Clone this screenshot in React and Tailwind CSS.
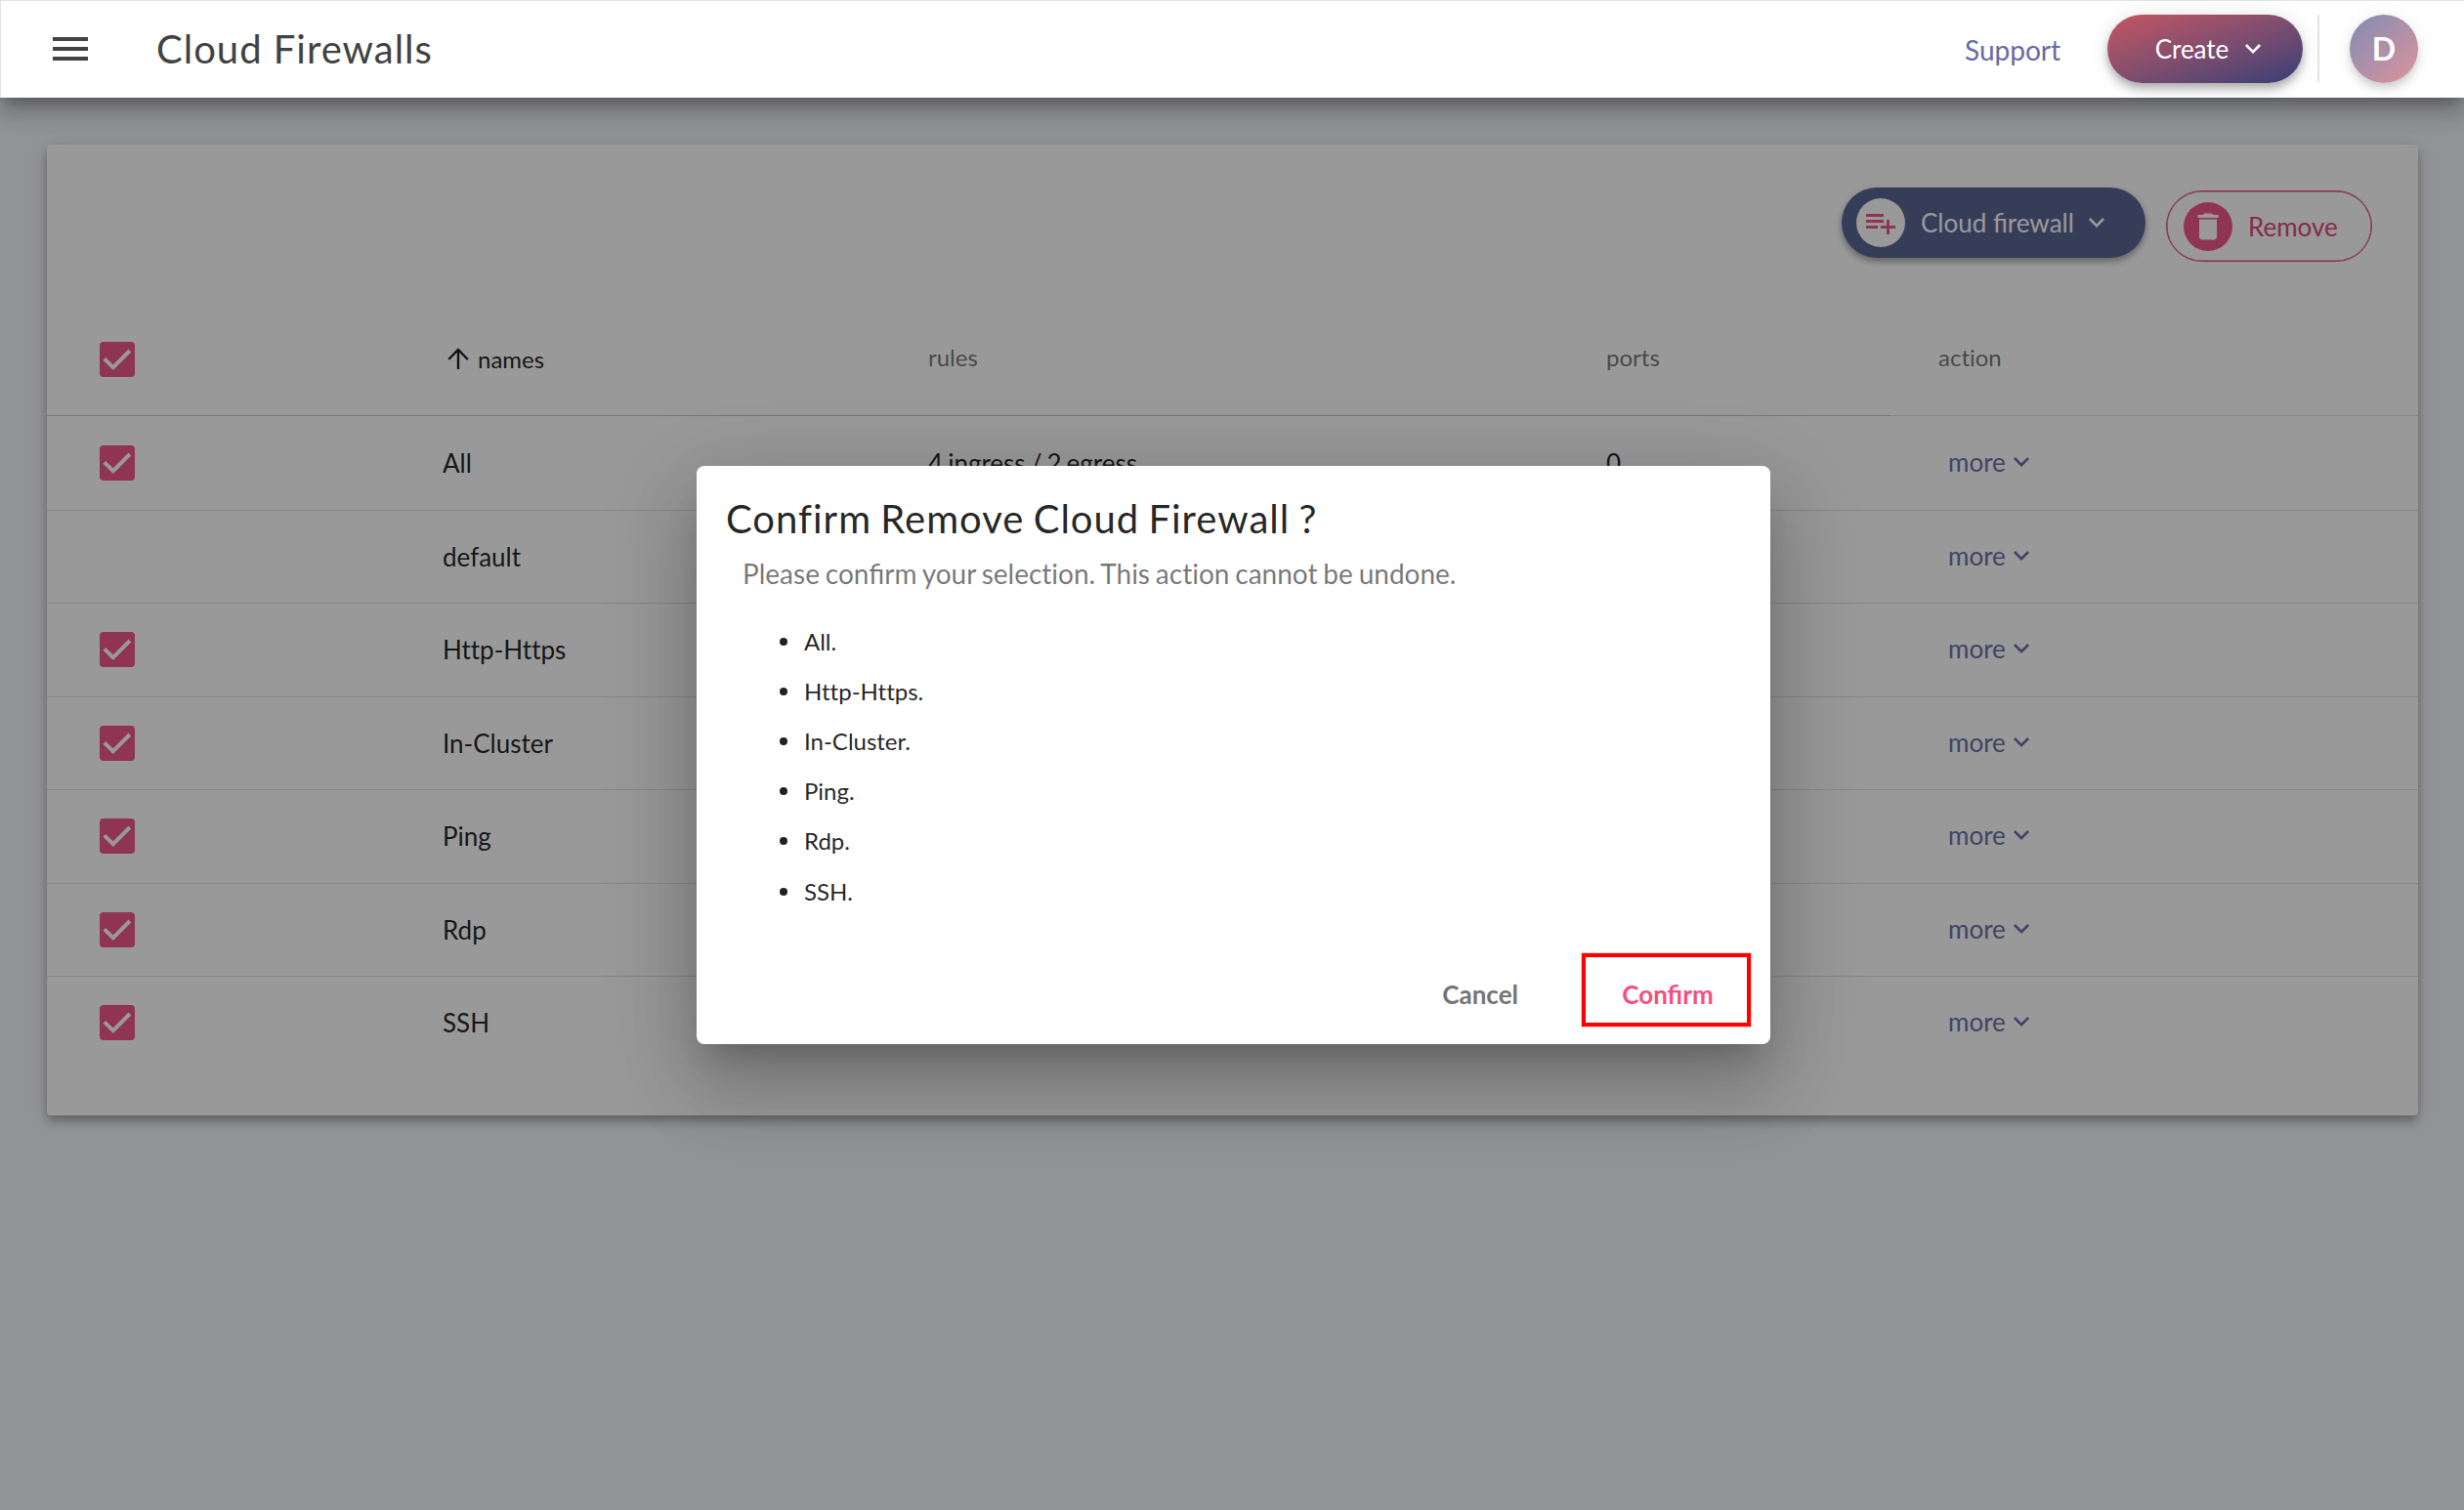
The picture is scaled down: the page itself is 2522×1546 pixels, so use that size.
import React from "react";

const rows = [
  { name: "All", rules: "4 ingress / 2 egress", ports: "0", checked: true },
  { name: "default", rules: "", ports: "", checked: false },
  { name: "Http-Https", rules: "", ports: "", checked: true },
  { name: "In-Cluster", rules: "", ports: "", checked: true },
  { name: "Ping", rules: "", ports: "", checked: true },
  { name: "Rdp", rules: "", ports: "", checked: true },
  { name: "SSH", rules: "", ports: "", checked: true },
];

const selected = ["All.", "Http-Https.", "In-Cluster.", "Ping.", "Rdp.", "SSH."];

function Chevron({ className }) {
  return (
    <svg viewBox="6 8.59 12 7.41" className={className} fill="currentColor">
      <path d="M7.41 8.59 12 13.17l4.59-4.58L18 10l-6 6-6-6z" />
    </svg>
  );
}

function Checkbox() {
  return (
    <span className="flex size-9 rounded-[4px] bg-[#ee578b] text-white">
      <svg viewBox="0 0 24 24" className="size-9" fill="none" stroke="currentColor" strokeWidth="2.66">
        <path d="M3.2 11.6 9.2 17.4 20.6 6" />
      </svg>
    </span>
  );
}

function Header() {
  return (
    <header className="relative z-20 flex h-[100px] items-center border-l border-t border-[#e3e3e3] bg-white pb-[2px] pl-[53px] pr-[47px] shadow-[0_10px_10px_-6px_rgba(0,0,0,0.2),0_16px_20px_2px_rgba(0,0,0,0.14),0_6px_28px_4px_rgba(0,0,0,0.12)]">
      <svg viewBox="0 0 36 24" className="mt-px h-6 w-9 text-[#424242]" fill="currentColor">
        <path d="M0 0h36v4H0zM0 10h36v4H0zM0 20h36v4H0z" />
      </svg>
      <h1 className="ml-[70px] text-[40px] leading-[48px] tracking-[1px] text-[#424242]">Cloud Firewalls</h1>
      <a className="ml-auto pt-[2px] text-[28px] leading-8 text-[#666ba3]">Support</a>
      <button className="ml-12 flex h-[70px] w-[200px] items-center justify-center rounded-full bg-linear-to-br from-[#c8545f] to-[#393c76] pl-[6px] pt-px text-[26px] leading-8 text-white shadow-[0_4px_8px_-2px_rgba(0,0,0,0.2),0_8px_10px_rgba(0,0,0,0.14),0_2px_20px_rgba(0,0,0,0.12)]">
        Create
        <Chevron className="ml-[17px] h-[10px] w-4" />
      </button>
      <span className="ml-[15px] h-[69px] w-[2px] bg-[#e3e3e3]" />
      <span className="ml-[31px] flex size-[70px] items-center justify-center rounded-full bg-linear-to-br from-[#7f8bb3] to-[#dc929b] text-[32px] font-bold leading-9 text-white shadow-[0_4px_8px_-2px_rgba(0,0,0,0.12),0_8px_10px_rgba(0,0,0,0.08),0_2px_20px_rgba(0,0,0,0.07)]">
        D
      </span>
    </header>
  );
}

function Toolbar() {
  return (
    <div className="flex h-[164px] items-start justify-end pr-[47px] pt-11 text-[26px] leading-8">
      <button className="flex h-[72px] w-[311px] items-center rounded-full bg-[#5a6694] pl-[15px] text-white shadow-[0_4px_8px_-2px_rgba(0,0,0,0.2),0_4px_6px_rgba(0,0,0,0.14),0_2px_10px_rgba(0,0,0,0.12)]">
        <span className="flex size-[50px] items-center justify-center rounded-full bg-white text-[#ee578b]">
          <svg viewBox="0 0 24 24" className="size-9" fill="currentColor">
            <path d="M14 10H2v2h12v-2zm0-4H2v2h12V6zm4 8v-4h-2v4h-4v2h4v4h2v-4h4v-2h-4zM2 16h8v-2H2v2z" />
          </svg>
        </span>
        <span className="ml-4">Cloud firewall</span>
        <Chevron className="ml-[15px] h-[10px] w-4" />
      </button>
      <button className="ml-[21px] mt-[3px] flex h-[73px] w-[211px] items-center rounded-full border border-[#dc4a7c] pl-[17px] text-[#e0497b] shadow-[inset_0_0_0_0.5px_#dc4a7c]">
        <span className="flex size-[50px] items-center justify-center rounded-full bg-[#ee578b] text-white">
          <svg viewBox="0 0 24 24" className="size-9" fill="currentColor">
            <path d="M6 19c0 1.1.9 2 2 2h8c1.100 0 2-.9 2-2V7H6v12zM19 4h-3.500l-1-1h-5l-1 1H5v2h14V4z" />
          </svg>
        </span>
        <span className="ml-4 pt-px">Remove</span>
      </button>
    </div>
  );
}

function Table() {
  return (
    <div>
      <div className="grid h-[113px] grid-cols-[405px_497px_694px_340px_1fr] pt-9 text-[24px] leading-[30px] text-black/55">
        <div className="mt-[2px] h-9 pl-[54px]">
          <Checkbox />
        </div>
        <div className="mt-[5px] flex pl-[5px] text-black/87">
          <svg viewBox="0 0 22 22" className="mt-[3px] size-[22px]" fill="none" stroke="currentColor" strokeWidth="2.4">
            <path d="M11 22V2M1.2 12 11 2l9.800 10" />
          </svg>
          <span className="ml-[9px]">names</span>
        </div>
        <div className="mt-[3px]">rules</div>
        <div className="mt-[3px]">ports</div>
        <div className="mt-[3px] [font-variant-ligatures:none]">action</div>
      </div>
      <div className="flex h-px">
        <span className="w-[1887px] bg-[#c6c6c6]" />
        <span className="flex-1 bg-[#e0e0e0]" />
      </div>
      <div>
        {rows.map((r) => (
          <div
            key={r.name}
            className="grid h-[95.5px] grid-cols-[405px_497px_694px_340px_1fr] items-center border-b border-[#e0e0e0] text-[26px] leading-8 text-black/87 first:h-[96.5px] last:border-transparent"
          >
            <div className="pl-[54px]">{r.checked && <Checkbox />}</div>
            <div className="[font-variant-ligatures:none]">{r.name}</div>
            <div className="[word-spacing:-1.6px]">{r.rules}</div>
            <div>{r.ports}</div>
            <div className="flex items-center pb-[2px] pl-[10px] text-[#6e70aa]">
              more
              <Chevron className="ml-2 h-[10px] w-4" />
            </div>
          </div>
        ))}
      </div>
    </div>
  );
}

function Dialog() {
  return (
    <div className="absolute left-[713px] top-[477px] z-30 flex h-[592px] w-[1099px] flex-col rounded-[8px] bg-white text-black/87 shadow-[0_22px_30px_-14px_rgba(0,0,0,0.2),0_48px_76px_6px_rgba(0,0,0,0.14),0_18px_92px_16px_rgba(0,0,0,0.12)]">
      <h2 className="pl-[30px] pt-[30px] text-[40px] leading-[48px] tracking-[1px] [word-spacing:-2px]">
        Confirm Remove Cloud Firewall ?
      </h2>
      <p className="mt-[14px] pl-[47px] text-[28px] leading-9 text-black/54 [word-spacing:-1.3px]">
        Please confirm your <span className="[font-variant-ligatures:none]">selection.</span> This{" "}
        <span className="[font-variant-ligatures:none]">action</span> cannot be undone.
      </p>
      <ul className="mt-[26px] pl-[85px] text-[24px] [font-variant-ligatures:none]">
        {selected.map((s) => (
          <li key={s} className="flex h-[51.2px] items-center leading-[30px]">
            <span className="mr-[17px] size-2 rounded-full bg-black/87" />
            {s}
          </li>
        ))}
      </ul>
      <div className="mb-[18px] ml-auto mr-5 mt-auto flex items-start text-[26px] font-bold leading-8">
        <button className="mr-[65px] pt-[26px] text-[#757575]">Cancel</button>
        <button className="h-[75px] w-[173px] border-4 border-[#ff0000] pl-[3px] pt-[9px] text-[#f5517f] shadow-[0_0_0_1px_rgba(255,0,0,0.2)]">
          Confirm
        </button>
      </div>
    </div>
  );
}

export default function App() {
  return (
    <div className="relative h-[1546px] overflow-hidden bg-[#f4f5fb] font-['Lato',sans-serif]">
      <Header />
      <main className="pl-12 pr-[47px] pt-12">
        <section className="h-[994px] rounded-[4px] bg-white shadow-[0_4px_8px_-2px_rgba(0,0,0,0.2),0_8px_10px_rgba(0,0,0,0.14),0_2px_20px_rgba(0,0,0,0.12)]">
          <Toolbar />
          <Table />
        </section>
      </main>
      <div className="absolute inset-0 z-10 bg-black/40" />
      <Dialog />
    </div>
  );
}
